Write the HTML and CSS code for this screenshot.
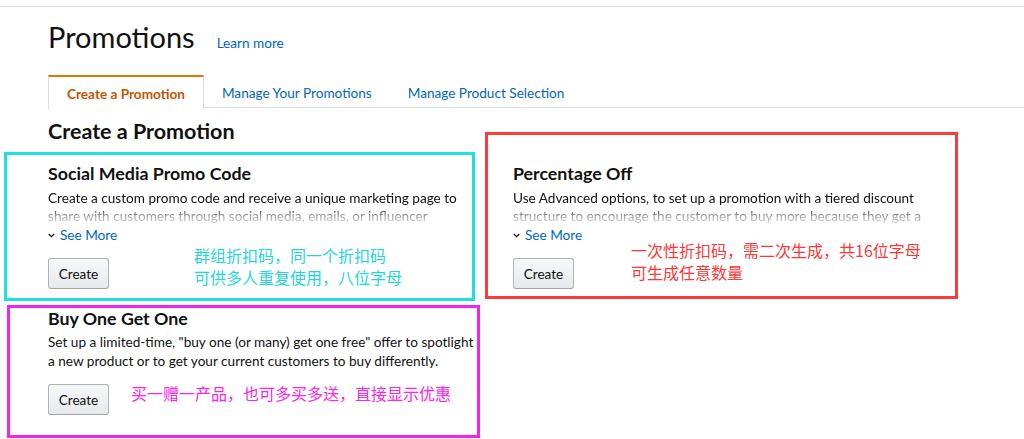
FILE: index.html
```html
<!DOCTYPE html>
<html lang="en">
<head>
<meta charset="utf-8">
<title>Promotions</title>
<link rel="stylesheet" href="styles.css">
</head>
<body>
<div class="topbar"></div>
<div class="page">
  <div class="header">
    <h1 class="title">Promotions</h1>
    <a class="learn" href="#">Learn more</a>
  </div>
  <div class="tabs">
    <div class="tab active">Create a Promotion</div>
    <div class="tab">Manage Your Promotions</div>
    <div class="tab">Manage Product Selection</div>
  </div>
  <h2 class="section-title">Create a Promotion</h2>
  <div class="grid">
    <div class="card">
      <h3 class="card-title">Social Media Promo Code</h3>
      <p class="desc clipped">Create a custom promo code and receive a unique marketing page to share with customers through social media, emails, or influencer</p>
      <a class="see-more" href="#"><svg class="chev" width="7" height="5" viewBox="0 0 7 5"><path d="M0.8 1 L3.5 3.7 L6.2 1" fill="none" stroke="#111" stroke-width="1.3"/></svg>See More</a>
      <button class="btn">Create</button>
    </div>
    <div class="card">
      <h3 class="card-title">Percentage Off</h3>
      <p class="desc clipped">Use Advanced options, to set up a promotion with a tiered discount structure to encourage the customer to buy more because they get a</p>
      <a class="see-more" href="#"><svg class="chev" width="7" height="5" viewBox="0 0 7 5"><path d="M0.8 1 L3.5 3.7 L6.2 1" fill="none" stroke="#111" stroke-width="1.3"/></svg>See More</a>
      <button class="btn">Create</button>
    </div>
    <div class="card">
      <h3 class="card-title">Buy One Get One</h3>
      <p class="desc">Set up a limited-time, "buy one (or many) get one free" offer to spotlight a new product or to get your current customers to buy differently.</p>
      <button class="btn">Create</button>
    </div>
  </div>
</div>

<div class="mark mark-cyan"></div>
<div class="mark mark-red"></div>
<div class="mark mark-magenta"></div>
<div class="note note-cyan">群组折扣码，同一个折扣码<br>可供多人重复使用，八位字母</div>
<div class="note note-red">一次性折扣码，需二次生成，共16位字母<br>可生成任意数量</div>
<div class="note note-magenta">买一赠一产品，也可多买多送，直接显示优惠</div>
</body>
</html>
```

FILE: styles.css
```css
* { box-sizing: border-box; }

body {
  margin: 0;
  font-family: Lato, "Liberation Sans", Arial, sans-serif;
  color: #111;
  background: #fff;
  position: relative;
  min-height: 439px;
  overflow: hidden;
}

.topbar {
  height: 7px;
  border-bottom: 1px solid #d8d8d8;
}

.page {
  padding-left: 48px;
}

.header {
  display: flex;
  align-items: baseline;
  margin-top: 13px;
  height: 34px;
}

.title {
  margin: 0;
  font-size: 29px;
  font-weight: 400;
  line-height: 34px;
}

.learn {
  margin-left: 22px;
  font-size: 13.6px;
  color: #0066c0;
  text-decoration: none;
}

.tabs {
  display: flex;
  margin-top: 21px;
  border-bottom: 1px solid #dddddd;
  height: 33px;
}

.tab {
  height: 33px;
  padding: 0 18px;
  display: flex;
  align-items: center;
  font-size: 13.6px;
  color: #0066c0;
  padding-top: 2px;
}

.tab.active {
  height: 34px;
  margin-bottom: -1px;
  border: 1px solid #dddddd;
  border-top: 2px solid #e77600;
  border-bottom: none;
  background: #fff;
  color: #c45500;
  font-weight: 700;
  padding-top: 1px;
}

.section-title {
  margin: 11px 0 0;
  font-size: 21.5px;
  font-weight: 700;
  line-height: 24px;
}

.grid {
  display: grid;
  grid-template-columns: 432px 432px;
  column-gap: 33px;
  row-gap: 17px;
  margin-top: 18px;
}

.card-title {
  margin: 0;
  font-size: 17.8px;
  font-weight: 700;
  line-height: 24px;
}

.desc {
  margin: 4px 0 0;
  font-size: 13.6px;
  line-height: 19px;
}

.desc.clipped {
  line-height: 18px;
  height: 36px;
  overflow: hidden;
  -webkit-mask-image: linear-gradient(to bottom, #000 0, #000 17px, rgba(0,0,0,0.35) 28px, rgba(0,0,0,0.2) 36px);
  mask-image: linear-gradient(to bottom, #000 0, #000 17px, rgba(0,0,0,0.35) 28px, rgba(0,0,0,0.2) 36px);
}

.see-more {
  display: flex;
  align-items: center;
  height: 19px;
  font-size: 13.6px;
  color: #0066c0;
  text-decoration: none;
}

.chev {
  margin-right: 5px;
  margin-top: 1px;
}

.btn {
  display: block;
  margin-top: 14px;
  width: 61px;
  height: 31px;
  padding: 0;
  font-family: inherit;
  font-size: 13.6px;
  color: #111;
  background: linear-gradient(to bottom, #f7f8fa, #e7e9ec);
  border: 1px solid #adb1b8;
  border-bottom-color: #a2a6ac;
  border-radius: 3px;
}

.card:nth-child(3) .desc { margin-top: 3px; }
.card:nth-child(3) .btn { margin-top: 13px; }

/* annotation overlays */
.mark {
  position: absolute;
  border: 3px solid;
}

.mark-cyan {
  left: 4px; top: 152px; width: 471px; height: 149px;
  border-color: #1de0e0;
}

.mark-red {
  left: 485px; top: 132px; width: 473px; height: 167px;
  border-color: #ff3a3a;
}

.mark-magenta {
  left: 7px; top: 305px; width: 473px; height: 133px;
  border-color: #f522ee;
}

.note {
  position: absolute;
  font-family: "Noto Sans CJK SC", "Noto Sans", sans-serif;
  font-size: 16px;
  line-height: 22px;
  white-space: nowrap;
}

.note-cyan {
  left: 194px; top: 244px;
  color: #1fd6da;
}

.note-red {
  left: 631px; top: 239px;
  color: #ff3636;
}

.note-magenta {
  left: 131px; top: 382px;
  color: #ff22ee;
}
```
